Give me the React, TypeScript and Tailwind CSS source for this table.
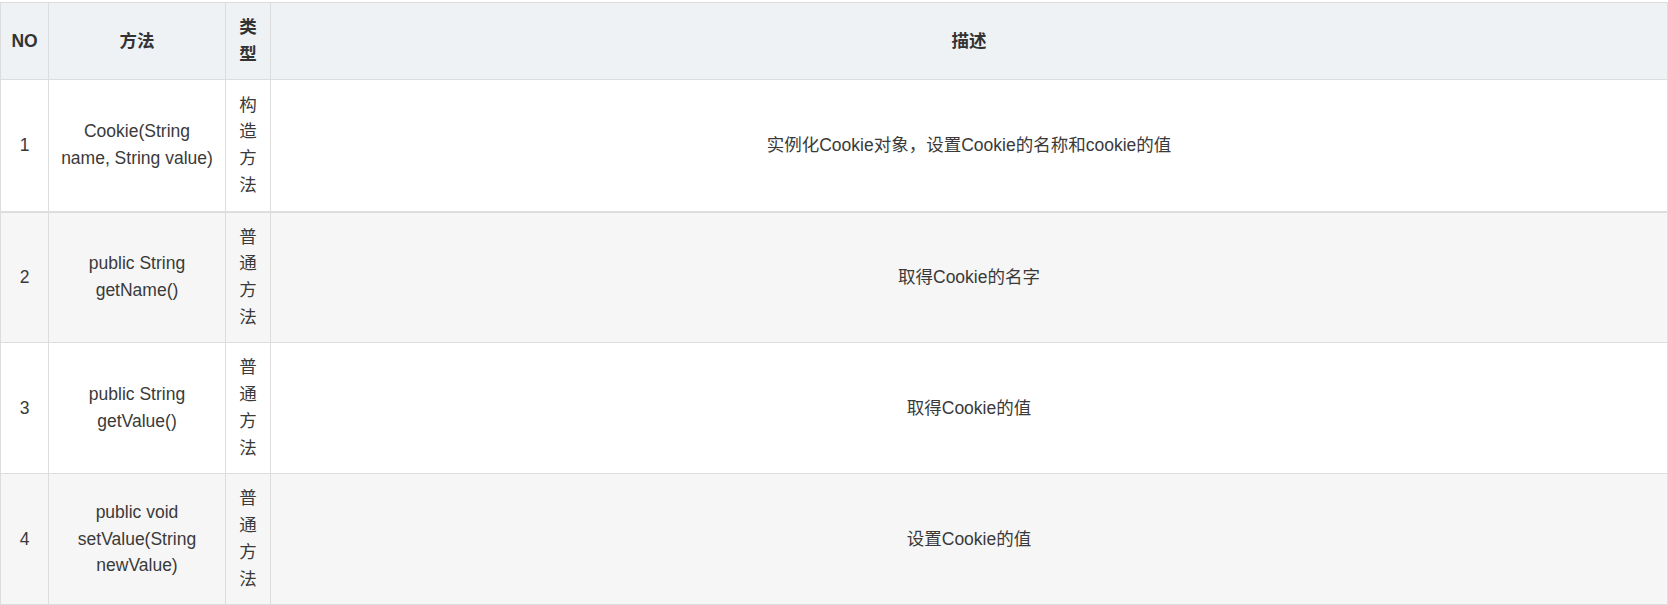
const rows = [
  { no: "1", method: "Cookie(String name, String value)", type: "构造方法", desc: "实例化Cookie对象，设置Cookie的名称和cookie的值" },
  { no: "2", method: "public String getName()", type: "普通方法", desc: "取得Cookie的名字" },
  { no: "3", method: "public String getValue()", type: "普通方法", desc: "取得Cookie的值" },
  { no: "4", method: "public void setValue(String newValue)", type: "普通方法", desc: "设置Cookie的值" },
]

export default function App() {
  return (
    <div
      className="w-[1668px] h-[605px] bg-white pt-[2px] text-[17.5px] leading-[26.8px] text-[#3a3a3a]"
      style={{ fontFamily: '"Liberation Sans", "Noto Sans CJK SC", sans-serif' }}
    >
      <table className="w-[1668px] table-fixed border-collapse text-center">
        <colgroup>
          <col className="w-[48px]" />
          <col className="w-[177px]" />
          <col className="w-[45px]" />
          <col />
        </colgroup>
        <thead>
          <tr className="h-[77px] bg-[#eef2f5] font-bold text-[#333]">
            <th className="border border-[#dddddd] px-[6px] align-middle">NO</th>
            <th className="border border-[#dddddd] px-[11px] align-middle">方法</th>
            <th className="border border-[#dddddd] px-[10px] align-middle">类型</th>
            <th className="border border-[#dddddd] px-3 align-middle">描述</th>
          </tr>
        </thead>
        <tbody>
          {rows.map((r, i) => (
            <tr
              key={r.no}
              className={
                (i % 2 === 1 ? "bg-[#f6f6f6] " : "bg-white ") +
                (i === 0 ? "h-[132px] border-b-2 border-b-[#dddddd]" : "h-[131px]")
              }
            >
              <td className="border border-[#dddddd] px-[6px] align-middle">{r.no}</td>
              <td className="border border-[#dddddd] px-[11px] align-middle">{r.method}</td>
              <td className="border border-[#dddddd] px-[10px] align-middle">{r.type}</td>
              <td className="border border-[#dddddd] px-3 align-middle">{r.desc}</td>
            </tr>
          ))}
        </tbody>
      </table>
    </div>
  )
}
